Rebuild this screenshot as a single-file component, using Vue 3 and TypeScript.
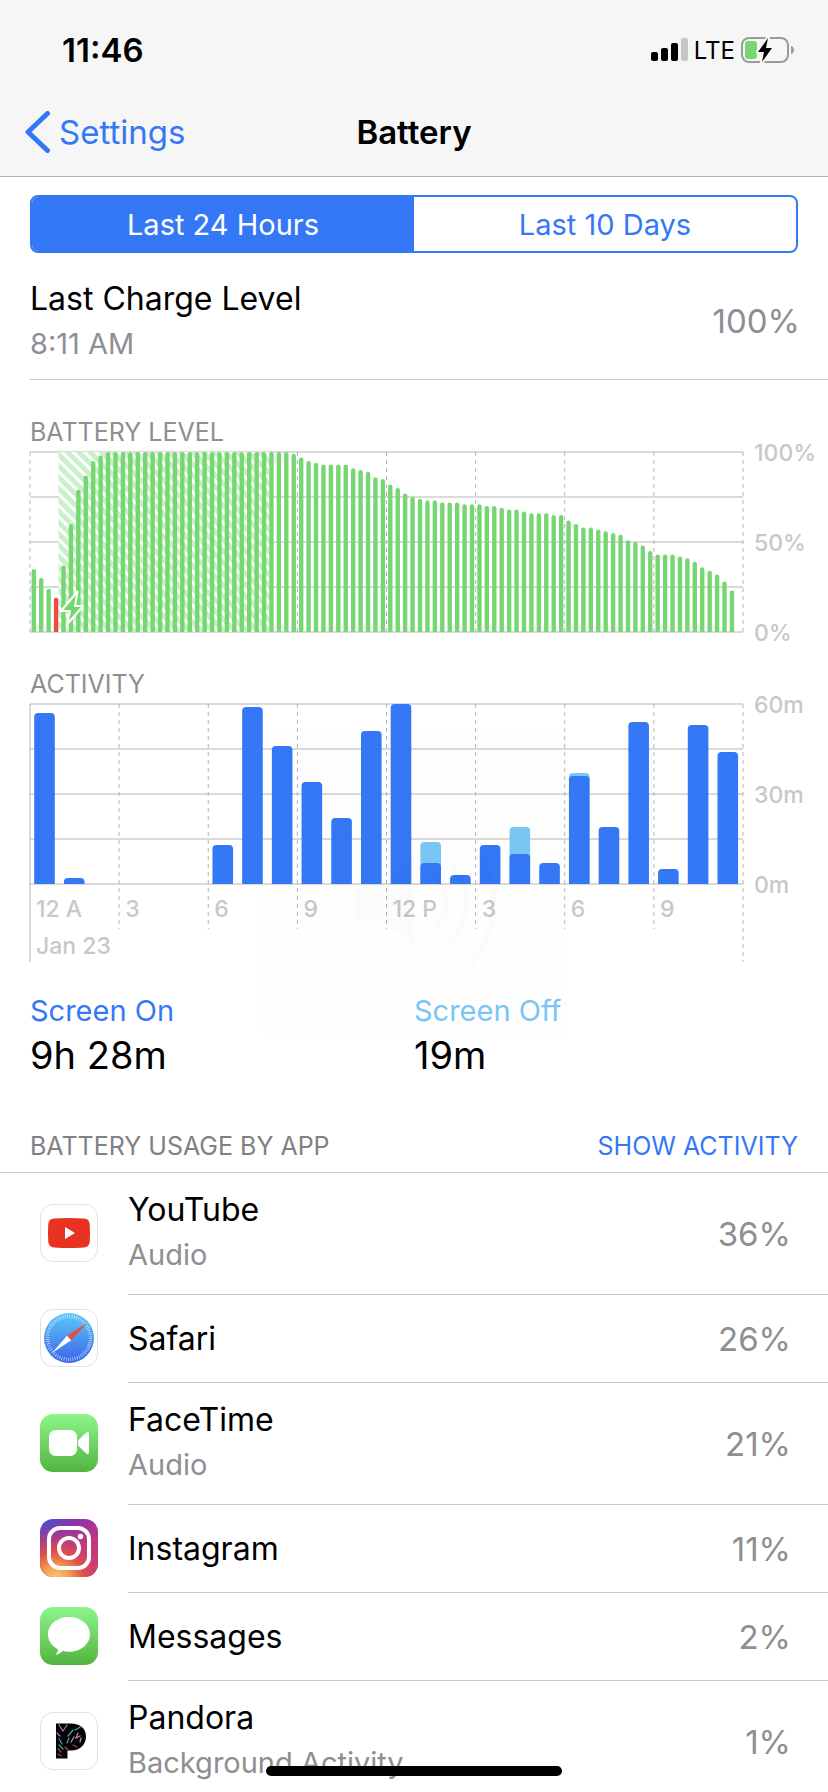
<script setup lang="ts">
import { ref } from 'vue'

interface AppUsage {
  id: string
  name: string
  detail?: string
  percent: number
}

interface HourActivity {
  on: number
  total: number
}

const range = ref<'day' | 'days'>('day')

const levels: number[] = [
  35, 30, 24, 19, 37, 60, 79, 87, 95, 98,
  ...Array<number>(25).fill(100),
  99, 97, 95, 94, 93, 93, 93, 93, 91, 90, 89, 86, 85, 82, 80, 77, 75, 74, 73, 73,
  72, 72, 72, 71, 71, 71, 70, 70, 69, 68, 68, 67, 66, 66, 66, 65, 65, 62, 60, 58,
  58, 57, 56, 55, 54, 51, 50, 48, 45, 43, 43, 43, 42, 41, 39, 36, 34, 32, 28, 23,
]

const screenOn: number[] = [57, 2, 0, 0, 0, 0, 13, 59, 46, 34, 22, 51, 60, 7, 3, 13, 10, 7, 36, 19, 54, 5, 53, 44]
const screenOff: Record<number, number> = { 13: 7, 16: 9, 18: 1 }
const hours: HourActivity[] = screenOn.map((on, i) => ({ on, total: on + (screenOff[i] ?? 0) }))

const gridRows = [0, 45, 90, 135, 180]
const gridColumns = [0, 1, 2, 3, 4, 5, 6, 7, 8]
const hourLabels = ['12 A', '3', '6', '9', '12 P', '3', '6', '9']

const apps: AppUsage[] = [
  { id: 'youtube', name: 'YouTube', detail: 'Audio', percent: 36 },
  { id: 'safari', name: 'Safari', percent: 26 },
  { id: 'facetime', name: 'FaceTime', detail: 'Audio', percent: 21 },
  { id: 'instagram', name: 'Instagram', percent: 11 },
  { id: 'messages', name: 'Messages', percent: 2 },
  { id: 'pandora', name: 'Pandora', detail: 'Background Activity', percent: 1 },
]

const share = (index: number, count: number): string => `${(index / count) * 100}%`
</script>

<template>
  <div class="screen">
    <header class="top">
      <div class="status">
        <span class="clock">11:46</span>
        <div class="indicators">
          <svg class="signal" width="37" height="24" viewBox="0 0 37 24" aria-hidden="true">
            <rect x="0" y="14" width="7" height="9" rx="2" />
            <rect x="10" y="10" width="7" height="13" rx="2" />
            <rect x="20" y="5" width="7" height="18" rx="2" />
            <rect x="30" y="0" width="7" height="23" rx="2" fill="#c6c6c6" />
          </svg>
          <span class="carrier">LTE</span>
          <svg width="54" height="26" viewBox="0 0 54 26" aria-hidden="true">
            <rect x="1" y="1" width="46" height="24" rx="7" fill="none" stroke="#9b9b9b" stroke-width="2" />
            <path d="M50 9c4 1 4 7 0 8z" fill="#9b9b9b" />
            <rect x="4" y="4" width="12" height="18" rx="3" fill="#77d572" />
            <path d="M27 1 17 15h6l-2 10 10-14h-6z" fill="#000" stroke="#f7f7f7" stroke-width="4" stroke-linejoin="round" />
            <path d="M27 1 17 15h6l-2 10 10-14h-6z" fill="#000" />
          </svg>
        </div>
      </div>
      <nav class="nav">
        <a class="back" href="#settings">
          <svg width="25" height="42" viewBox="0 0 25 42" aria-hidden="true">
            <path d="M22.500 2.500 3 21l19.500 18.500" fill="none" stroke="#3478f6" stroke-width="5" stroke-linecap="round" stroke-linejoin="round" />
          </svg>
          <span>Settings</span>
        </a>
        <h1>Battery</h1>
      </nav>
    </header>

    <main>
      <div class="segments">
        <button type="button" :class="{ active: range === 'day' }" :aria-pressed="range === 'day'" @click="range = 'day'">Last 24 Hours</button>
        <button type="button" :class="{ active: range === 'days' }" :aria-pressed="range === 'days'" @click="range = 'days'">Last 10 Days</button>
      </div>

      <section class="charge">
        <div>
          <div class="title">Last Charge Level</div>
          <div class="detail">8:11 AM</div>
        </div>
        <span class="amount">100%</span>
      </section>

      <section class="graph">
        <h2>BATTERY LEVEL</h2>
        <svg class="chart" width="100%" height="180" role="img" aria-label="Battery level">
          <defs>
            <pattern id="hatch" width="8" height="8" patternUnits="userSpaceOnUse" patternTransform="rotate(45)">
              <rect width="8" height="8" fill="#c9f0c9" />
              <rect width="8" height="3" fill="#fff" />
            </pattern>
          </defs>
          <line v-for="y in gridRows" :key="y" class="row-line" x1="0" x2="100%" :y1="y" :y2="y" />
          <line v-for="c in gridColumns" :key="c" class="column-line" :x1="share(c, 8)" :x2="share(c, 8)" y1="0" y2="180" />
          <rect x="4%" y="0" width="29.600%" height="180" fill="url(#hatch)" />
          <svg width="100%" height="180">
            <g transform="translate(1.600 0)">
              <rect
                v-for="(level, i) in levels"
                :key="i"
                :x="share(i, 96)"
                :y="180 - level * 1.8"
                width="4.400"
                :height="level * 1.8 + 4"
                rx="2.200"
                :fill="level < 20 ? '#ea4c3d' : '#76d672'"
              />
            </g>
          </svg>
          <path d="M47.500 139.500 31 159h9l-3 13.500L53 154h-8z" fill="#76d672" stroke="#fff" stroke-width="2" stroke-linejoin="round" />
          <g class="axis">
            <text x="100%" y="9" dx="11">100%</text>
            <text x="100%" y="99" dx="11">50%</text>
            <text x="100%" y="189" dx="11">0%</text>
          </g>
        </svg>
      </section>

      <section class="graph">
        <h2>ACTIVITY</h2>
        <svg class="chart" width="100%" height="258" role="img" aria-label="Activity">
          <line v-for="y in gridRows" :key="y" class="row-line" x1="0" x2="100%" :y1="y" :y2="y" />
          <line
            v-for="c in gridColumns"
            :key="c"
            class="column-line"
            :class="{ solid: c === 0 }"
            :x1="share(c, 8)"
            :x2="share(c, 8)"
            y1="0"
            :y2="c % 8 === 0 ? 258 : 225"
          />
          <svg width="100%" height="180">
            <g transform="translate(4.200 0)">
              <template v-for="(hour, i) in hours" :key="i">
                <rect v-if="hour.total > hour.on" :x="share(i, 24)" :y="180 - hour.total * 3" width="20.600" :height="hour.total * 3 + 5" rx="4" fill="#7ac6f5" />
                <rect v-if="hour.on" :x="share(i, 24)" :y="180 - hour.on * 3" width="20.600" :height="hour.on * 3 + 5" rx="4" fill="#3478f6" />
              </template>
            </g>
          </svg>
          <g class="axis">
            <text x="100%" y="9" dx="11">60m</text>
            <text x="100%" y="99" dx="11">30m</text>
            <text x="100%" y="189" dx="11">0m</text>
            <text v-for="(label, i) in hourLabels" :key="i" :x="share(i, 8)" y="213" dx="6">{{ label }}</text>
            <text x="0" y="250" dx="6">Jan 23</text>
          </g>
        </svg>
      </section>

      <section class="totals">
        <div>
          <div class="label on">Screen On</div>
          <div class="value">9h 28m</div>
        </div>
        <div>
          <div class="label off">Screen Off</div>
          <div class="value">19m</div>
        </div>
      </section>

      <section>
        <div class="usage-head">
          <h2>BATTERY USAGE BY APP</h2>
          <button type="button">SHOW ACTIVITY</button>
        </div>
        <ul class="apps">
          <li v-for="app in apps" :key="app.id">
            <svg class="icon" width="58" height="58" viewBox="0 0 58 58" aria-hidden="true">
              <template v-if="app.id === 'youtube'">
                <rect x=".5" y=".5" width="57" height="57" rx="12.500" fill="#fff" stroke="#e2e2e2" />
                <path d="M14 14.600Q29 13.200 44 14.600 49.300 15 49.700 20 50.400 29 49.700 38 49.300 43 44 43.400 29 44.800 14 43.400 8.700 43 8.300 38 7.600 29 8.300 20 8.700 15 14 14.600z" fill="#e83323" />
                <path d="M25 23v12l10-6z" fill="#fff" />
              </template>
              <template v-else-if="app.id === 'safari'">
                <defs>
                  <linearGradient id="sea" x2="0" y2="1">
                    <stop stop-color="#5dc8f8" />
                    <stop offset="1" stop-color="#3a63ea" />
                  </linearGradient>
                </defs>
                <rect x=".5" y=".5" width="57" height="57" rx="12.500" fill="#fff" stroke="#e2e2e2" />
                <circle cx="29" cy="29" r="25" fill="url(#sea)" />
                <circle cx="29" cy="29" r="21.500" fill="none" stroke="#e4f3fd" stroke-width="3.500" stroke-dasharray=".7 1.550" opacity=".85" />
                <path d="m47 14-20 12.800 4.200 4.400z" fill="#e94e3c" />
                <path d="m12 44 15-17.200 4.200 4.400z" fill="#fff" />
              </template>
              <template v-else-if="app.id === 'facetime'">
                <defs>
                  <linearGradient id="leaf" x2="0" y2="1">
                    <stop stop-color="#8df58a" />
                    <stop offset="1" stop-color="#53b43f" />
                  </linearGradient>
                </defs>
                <rect width="58" height="58" rx="13" fill="url(#leaf)" />
                <rect x="9" y="16" width="28" height="26" rx="6.500" fill="#fff" />
                <path d="M38 26.500 46 18.700Q49 16.500 49 20v18q0 3.500-3 1.300L38 31.500z" fill="#fff" />
              </template>
              <template v-else-if="app.id === 'instagram'">
                <defs>
                  <linearGradient id="dusk" x1=".1" y1="0" x2=".9" y2="1">
                    <stop stop-color="#4b51ca" />
                    <stop offset=".3" stop-color="#9033a6" />
                    <stop offset=".65" stop-color="#c13680" />
                    <stop offset="1" stop-color="#cf3b70" />
                  </linearGradient>
                  <radialGradient id="glow" cx=".27" cy="1.050" r=".95">
                    <stop stop-color="#fad077" />
                    <stop offset=".25" stop-color="#f2a052" />
                    <stop offset=".52" stop-color="#df5147" stop-opacity=".95" />
                    <stop offset="1" stop-color="#c13680" stop-opacity="0" />
                  </radialGradient>
                </defs>
                <rect width="58" height="58" rx="13" fill="url(#dusk)" />
                <rect width="58" height="58" rx="13" fill="url(#glow)" />
                <rect x="9" y="9" width="40" height="40" rx="11" fill="none" stroke="#fff" stroke-width="4" />
                <circle cx="29" cy="29" r="10" fill="none" stroke="#fff" stroke-width="4" />
                <circle cx="40.500" cy="17.500" r="2.700" fill="#fff" />
              </template>
              <template v-else-if="app.id === 'messages'">
                <rect width="58" height="58" rx="13" fill="url(#leaf)" />
                <path d="M29 10c11.800 0 21 7.600 21 17.300S40.800 44.800 29 44.800c-2.300 0-4.500-.3-6.500-.8-1.800 2-4.300 3.600-7.500 4 1.800-1.500 3-3.500 3-5.600C12 39.300 8 33.800 8 27.300 8 17.600 17.200 10 29 10z" fill="#fff" />
              </template>
              <template v-else>
                <defs>
                  <clipPath id="mark">
                    <path d="M16 11.500h15c9 0 15 5 15 13S40 38.500 31 38.500h-3.500V46.500H16z" />
                  </clipPath>
                </defs>
                <rect x=".5" y=".5" width="57" height="57" rx="12.500" fill="#fff" stroke="#e2e2e2" />
                <g clip-path="url(#mark)" fill="none" stroke-linecap="round" stroke-width="1.200">
                  <rect x="15" y="10" width="32" height="38" fill="#050505" />
                  <path d="m19 13 4 6 4-6M17 21l3 3" stroke="#a57cc6" />
                  <path d="m19 27 3 5M33 18l-5 6M42 14l-7 4M19 33l4 4M29 26l-2 5" stroke="#3fa9b5" />
                  <path d="m31 30 3-5M38 21l-2 5 4-2M41 26l-1 4" stroke="#c890a4" />
                  <path d="m18 42 3 2M25 35l3 3M33 33l4 2M18 37l3 3" stroke="#a84850" />
                </g>
              </template>
            </svg>
            <div class="entry">
              <div :class="{ names: app.detail }">
                <div class="title">{{ app.name }}</div>
                <div v-if="app.detail" class="detail">{{ app.detail }}</div>
              </div>
              <span class="amount">{{ app.percent }}%</span>
            </div>
          </li>
        </ul>
      </section>
    </main>

    <div class="volume" aria-hidden="true">
      <span>Volume</span>
      <svg width="200" height="140" viewBox="0 0 200 140">
        <path d="M40 48h26l34-28v88L66 84H40z" fill="currentColor" />
        <path d="M122 42q20 24 0 48M138 28q30 38 0 76M158 10q44 56 0 116" fill="none" stroke="currentColor" stroke-width="6" stroke-linecap="round" />
      </svg>
    </div>
    <div class="home-bar"></div>
  </div>
</template>

<style>
body {
  background: #fff;
}
</style>

<style scoped>
.screen {
  position: relative;
  display: flex;
  flex-direction: column;
  height: 100vh;
  overflow: hidden;
  background: #fff;
  color: #000;
  font-family: Inter, "Liberation Sans", sans-serif;
  font-size: 32px;
}

h1,
h2 {
  margin: 0;
}

button {
  margin: 0;
  padding: 0;
  border: 0;
  background: none;
  color: #3478f6;
  font: inherit;
}

.top {
  flex: none;
  border-bottom: 1px solid #b2b2b2;
  background: #f6f6f6;
}

.status {
  display: flex;
  align-items: center;
  justify-content: space-between;
  height: 88px;
  padding: 12px 33px 0 62px;
  box-sizing: border-box;
}

.clock {
  font-size: 33px;
  font-weight: 600;
}

.indicators {
  display: flex;
  align-items: center;
  gap: 6px;
}

.carrier {
  font-size: 24px;
  font-weight: 400;
}

.nav {
  display: grid;
  grid-template-columns: 1fr auto 1fr;
  align-items: center;
  height: 88px;
  padding: 0 25px;
  font-size: 33px;
}

.back {
  display: flex;
  align-items: center;
  gap: 9px;
  color: #3478f6;
  text-decoration: none;
}

.nav h1 {
  font-size: 33px;
  font-weight: 600;
}

main {
  flex: 1;
  min-height: 0;
  overflow: hidden;
}

.segments {
  display: flex;
  height: 58px;
  margin: 18px 30px 0;
  box-sizing: border-box;
  overflow: hidden;
  border: 2px solid #3478f6;
  border-radius: 8px;
}

.segments button {
  flex: 1;
  font-size: 29px;
}

.segments .active {
  background: #3478f6;
  color: #fff;
}

.charge {
  display: flex;
  align-items: center;
  justify-content: space-between;
  margin-left: 30px;
  padding: 23px 28px 13px 0;
  border-bottom: 1px solid #c8c7cc;
}

.title,
.detail {
  line-height: 45px;
}

.detail {
  color: #8e8e93;
  font-size: 29px;
}

.amount {
  color: #8e8e93;
  font-size: 33px;
}

.graph {
  margin: 37px 85px 0 30px;
}

.graph h2,
.usage-head {
  color: #8e8e93;
  font-size: 25px;
  font-weight: 400;
  line-height: 30px;
}

.chart {
  display: block;
  margin-top: 5px;
  overflow: visible;
}

.row-line {
  stroke: #dadadb;
  stroke-width: 2;
}

.column-line {
  stroke: #b4b4b8;
  stroke-width: 1;
  stroke-dasharray: 4 4;
}

.solid {
  stroke-dasharray: none;
}

.axis {
  fill: #c7c7cc;
  font-size: 23px;
  font-weight: 500;
}

.totals {
  display: grid;
  grid-template-columns: 1fr 1fr;
  padding: 26px 30px 0;
  line-height: 45px;
}

.label {
  font-size: 29px;
}

.on {
  color: #3478f6;
}

.off {
  color: #7ac6f5;
}

.value {
  font-size: 38px;
}

.usage-head {
  display: flex;
  justify-content: space-between;
  padding: 53px 30px 11px;
  border-bottom: 1px solid #c8c7cc;
  color: #808085;
}

.usage-head h2 {
  font: inherit;
}

.apps {
  margin: 0;
  padding: 0;
  list-style: none;
}

.apps li {
  display: flex;
  align-items: center;
  padding-left: 40px;
}

.icon {
  flex: none;
  margin-bottom: 3px;
}

.entry {
  display: flex;
  flex: 1;
  align-items: center;
  justify-content: space-between;
  min-height: 87px;
  margin-left: 30px;
  padding-right: 37px;
  border-bottom: 1px solid #c8c7cc;
}

.names {
  padding: 14px 0 17px;
}

.volume {
  position: absolute;
  top: 732px;
  left: calc(50% - 154px);
  display: flex;
  flex-direction: column;
  align-items: center;
  gap: 48px;
  width: 308px;
  height: 308px;
  padding-top: 18px;
  box-sizing: border-box;
  border-radius: 16px;
  background: rgba(0, 0, 40, 0.005);
  color: rgba(0, 0, 0, 0.012);
  pointer-events: none;
}

.home-bar {
  position: absolute;
  bottom: 16px;
  left: 50%;
  width: 296px;
  height: 10px;
  border-radius: 5px;
  background: #000;
  transform: translateX(-50%);
}
</style>
